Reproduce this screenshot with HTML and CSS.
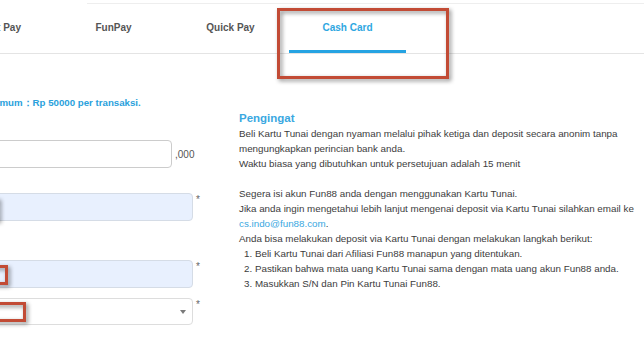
FILE: index.html
```html
<!DOCTYPE html>
<html lang="id">
<head>
<meta charset="utf-8">
<title>Cash Card</title>
<link rel="stylesheet" href="styles.css">
</head>
<body>
<div class="topline"></div>
<nav class="tabs">
  <div class="tab">Direct Pay</div>
  <div class="tab">FunPay</div>
  <div class="tab">Quick Pay</div>
  <div class="tab active">Cash Card</div>
</nav>
<div class="content">
  <div class="form">
    <div class="min">Mini<span>mum：Rp 50000 per transaksi.</span></div>
    <div class="row row-amount">
      <div class="field field-amount"></div>
      <span class="suffix">,000</span>
    </div>
    <div class="row row-sn">
      <div class="field field-filled"></div>
      <span class="req">*</span>
    </div>
    <div class="row row-pin">
      <div class="field field-filled"></div>
      <span class="req">*</span>
    </div>
    <div class="row row-select">
      <div class="field field-select"><span class="caret"></span></div>
      <span class="req">*</span>
    </div>
  </div>
  <div class="notes">
    <h3 class="notes-title">Pengingat</h3>
    <p class="notes-text">Beli Kartu Tunai dengan nyaman melalui pihak ketiga dan deposit secara anonim tanpa<br>mengungkapkan perincian bank anda.<br>Waktu biasa yang dibutuhkan untuk persetujuan adalah 15 menit</p>
    <p class="notes-text">Segera isi akun Fun88 anda dengan menggunakan Kartu Tunai.<br>Jika anda ingin mengetahui lebih lanjut mengenai deposit via Kartu Tunai silahkan email ke<br><a class="mail" href="#">cs.indo@fun88.com</a>.<br>Anda bisa melakukan deposit via Kartu Tunai dengan melakukan langkah berikut:</p>
    <div class="step">1. Beli Kartu Tunai dari Afiliasi Fun88 manapun yang ditentukan.</div>
    <div class="step">2. Pastikan bahwa mata uang Kartu Tunai sama dengan mata uang akun Fun88 anda.</div>
    <div class="step">3. Masukkan S/N dan Pin Kartu Tunai Fun88.</div>
  </div>
</div>
<div class="mark mark-tab"></div>
<div class="mark mark-a"></div>
<div class="mark mark-b"></div>
<div class="mark mark-c"></div>
</body>
</html>
```
FILE: styles.css
```css
html, body {
  margin: 0;
  padding: 0;
}
body {
  width: 644px;
  height: 338px;
  overflow: hidden;
  position: relative;
  background: #fff;
  font-family: "Liberation Sans", Arial, sans-serif;
  color: #444;
}
.topline {
  height: 3px;
  margin-left: 87px;
  border-bottom: 1px solid #eeeeee;
}
.tabs {
  display: flex;
  margin-left: -62px;
  height: 49px;
  border-bottom: 1px solid #e4e4e4;
}
.tab {
  flex: none;
  width: 117px;
  height: 49px;
  box-sizing: border-box;
  padding-top: 18px;
  text-align: center;
  font-size: 10px;
  line-height: 12px;
  font-weight: bold;
  color: #555;
}
.tab.active {
  color: #2fa7e1;
  border-bottom: 3px solid #25a3e2;
}
.content {
  display: flex;
  margin-left: -20px;
}
.form {
  flex: none;
  width: 259px;
  padding-top: 43px;
}
.min {
  font-size: 9.7px;
  line-height: 12px;
  height: 12px;
  font-weight: bold;
  color: #2aa1dc;
  white-space: nowrap;
}
.row {
  display: flex;
  align-items: flex-start;
}
.row-amount { margin-top: 31px; align-items: center; }
.row-sn { margin-top: 25px; }
.row-pin { margin-top: 39px; }
.row-select { margin-top: 10px; }
.field {
  box-sizing: border-box;
  height: 28px;
  width: 213px;
  border: 1px solid #d6d9de;
  border-radius: 4px;
  background: #fff;
}
.field-amount {
  width: 192px;
  border-color: #cccccc;
}
.field-filled {
  background: #e8f0fe;
  border-color: #d5dce6;
}
.field-select {
  height: 27px;
  border-color: #dddddd;
  display: flex;
  align-items: center;
  justify-content: flex-end;
  padding-right: 6px;
}
.caret {
  width: 0;
  height: 0;
  border-left: 3px solid transparent;
  border-right: 3px solid transparent;
  border-top: 4px solid #7a7a7a;
}
.suffix {
  margin-left: 3px;
  font-size: 10px;
  color: #555;
}
.req {
  margin-left: 3px;
  margin-top: 2px;
  font-size: 10px;
  line-height: 10px;
  color: #666;
}
.notes {
  padding-top: 56px;
  font-size: 9.8px;
  line-height: 15px;
  color: #3c3c3c;
  white-space: nowrap;
}
.notes-title {
  margin: 0;
  font-size: 11.5px;
  line-height: 16px;
  font-weight: bold;
  color: #3aa8e1;
}
.notes-text {
  margin: 0 0 15px 0;
}
.notes-text + .notes-text {
  margin-bottom: 0;
}
.mail {
  color: #3aa8e1;
  text-decoration: none;
}
.step {
  padding-left: 5px;
}
.mark {
  position: absolute;
  box-sizing: border-box;
  border: 3px solid #c24b35;
  filter: drop-shadow(2px 2px 2px rgba(0, 0, 0, 0.45));
}
.mark-tab {
  left: 277px;
  top: 8px;
  width: 172px;
  height: 71px;
}
.mark-a {
  left: -60px;
  top: 265px;
  width: 68px;
  height: 20px;
}
.mark-b {
  left: -60px;
  top: 302px;
  width: 86px;
  height: 20px;
}
.mark-c {
  left: -60px;
  top: 198px;
  width: 59px;
  height: 23px;
}
```
